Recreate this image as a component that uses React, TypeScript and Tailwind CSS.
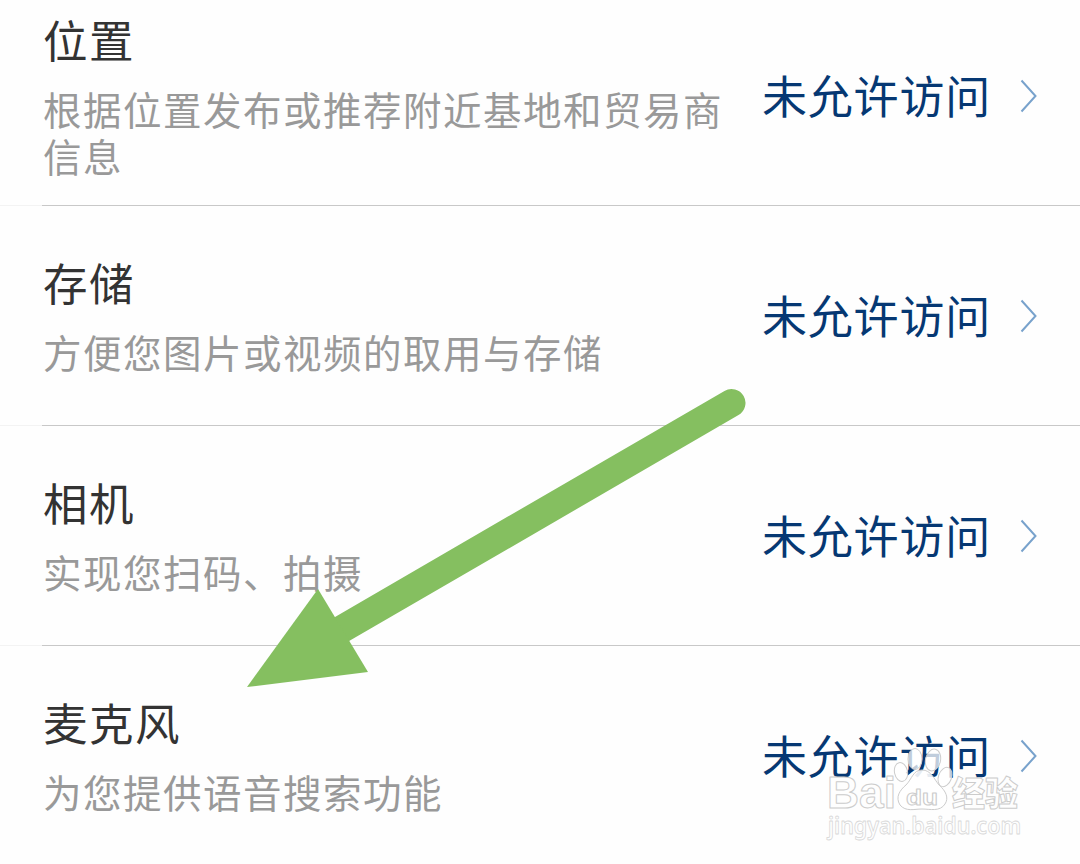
interface Permission {
  name: string;
  description: string;
  status: string;
}

const permissions: Permission[] = [
  { name: '位置', description: '根据位置发布或推荐附近基地和贸易商信息', status: '未允许访问' },
  { name: '存储', description: '方便您图片或视频的取用与存储', status: '未允许访问' },
  { name: '相机', description: '实现您扫码、拍摄', status: '未允许访问' },
  { name: '麦克风', description: '为您提供语音搜索功能', status: '未允许访问' },
];

function ChevronIcon() {
  return (
    <svg className="ml-[28px] h-[36px] w-[20px] shrink-0" viewBox="0 0 20 36" fill="none">
      <path d="M2.5 2.5 L16.5 18 L2.5 33.5" stroke="#78a2cc" strokeWidth="2" />
    </svg>
  );
}

function PermissionRow({ permission }: { permission: Permission }) {
  return (
    <li className="flex h-[220px] shrink-0">
      <div className="w-[42px] border-b border-[#f3f3f3]" />
      <div className="flex flex-1 items-center border-b border-[#c8c8c8]">
        <div className="w-[683px] pb-[8px] pl-[1px]">
          <h2 className="text-[44.5px] leading-[67px] tracking-[1.5px] text-[#333333]">{permission.name}</h2>
          <p className="mt-[13px] text-[38.5px] leading-[47px] tracking-[1.5px] text-[#999999]">{permission.description}</p>
        </div>
        <button type="button" className="ml-[37px] flex items-center">
          <span className="pb-[2px] text-[45px] leading-[67px] tracking-[0.8px] whitespace-nowrap text-[#063873]">
            {permission.status}
          </span>
          <ChevronIcon />
        </button>
      </div>
    </li>
  );
}

function Arrow() {
  return (
    <svg className="pointer-events-none absolute inset-0 h-[864px] w-[1080px]" viewBox="0 0 1080 864">
      <path d="M731.5 403 L330 636" stroke="#85bf60" strokeWidth="28" strokeLinecap="round" />
      <path d="M247 687 L318 589 L368 672 Z" fill="#85bf60" />
    </svg>
  );
}

function Watermark() {
  return (
    <svg
      className="pointer-events-none absolute top-[740px] left-[820px] h-[110px] w-[210px] overflow-visible"
      viewBox="0 0 210 110"
      fill="#ffffff"
      fillOpacity="0.75"
      stroke="#cccccc"
      strokeWidth="1"
      strokeLinejoin="round"
    >
      {/* Paw */}
      <ellipse cx="81" cy="32" rx="6.5" ry="9.5" transform="rotate(-12 81 32)" />
      <ellipse cx="95" cy="19" rx="7" ry="10.5" />
      <ellipse cx="113" cy="20" rx="7.5" ry="11" transform="rotate(12 113 20)" />
      <ellipse cx="125" cy="37" rx="6.5" ry="10" transform="rotate(20 125 37)" />
      <path
        d="M102 30 C111 30 114 39 119 45 C126 51 129 58 125 64 C120 72 110 69 102 69 C94 69 86 72 80 65 C75 57 80 50 86 45 C92 39 93 30 102 30 Z"
        fillOpacity="0.9"
      />
      <g className="font-['Liberation_Sans'] font-bold">
        <text x="7" y="68" fontSize="44" textLength="69" lengthAdjust="spacingAndGlyphs">Bai</text>
        <text x="86" y="65" fontSize="22" textLength="32" lengthAdjust="spacingAndGlyphs">du</text>
      </g>
      <text x="132" y="66" fontSize="34" textLength="66" lengthAdjust="spacingAndGlyphs" className="font-['Noto_Sans_CJK_SC'] font-black">
        经验
      </text>
      <text x="8" y="94" fontSize="23" strokeWidth="0.8" stroke="#d8d8d8" textLength="193" lengthAdjust="spacingAndGlyphs" className="font-['Noto_Sans'] font-semibold">
        jingyan.baidu.com
      </text>
    </svg>
  );
}

export default function App() {
  return (
    <main className="relative h-[864px] w-[1080px] overflow-hidden bg-[#fefefe] font-['Noto_Sans_CJK_SC',sans-serif]">
      <ul className="-mt-[14px] flex flex-col">
        {permissions.map((permission) => (
          <PermissionRow key={permission.name} permission={permission} />
        ))}
      </ul>
      <Arrow />
      <Watermark />
    </main>
  );
}
